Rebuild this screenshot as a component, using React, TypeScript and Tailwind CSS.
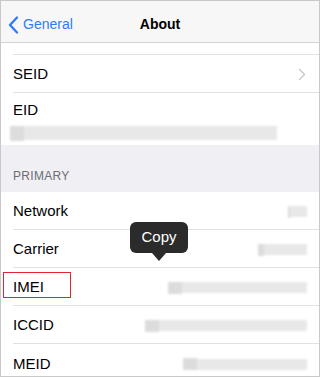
import React from "react";

type Row = {
  label: string;
  value?: number[]; // [width] of the blurred value
  chevron?: boolean;
  last?: boolean;
};

const Blur = ({ w, h = 12 }: { w: number; h?: number }) => (
  <div className="flex items-center blur-[1.2px]">
    <div className="bg-[#dcdcdc]" style={{ width: Math.min(14, w * 0.12), height: h }} />
    <div className="bg-[#e8e8e8]" style={{ width: w - Math.min(14, w * 0.12), height: h - 1 }} />
  </div>
);

const Chevron = () => (
  <svg width="8" height="13" viewBox="0 0 8 13" fill="none">
    <path d="M1.5 1.5 6.5 6.5 1.5 11.5" stroke="#c7c7cc" strokeWidth="1.4" strokeLinecap="round" strokeLinejoin="round" />
  </svg>
);

const ListRow = ({ label, value, chevron, last }: Row) => (
  <div className="ml-3 h-[38px] shrink-0">
    <div
      className={`flex h-full items-center justify-between pr-3 pt-[2px] ${
        last ? "" : "border-b border-[#e1e1e4]"
      }`}
    >
      <span className="text-[15px] text-black">{label}</span>
      {value && <Blur w={value[0]} />}
      {chevron && (
        <span className="pr-[1px]">
          <Chevron />
        </span>
      )}
    </div>
  </div>
);

export default function App() {
  return (
    <div
      className="relative flex h-[377px] w-[320px] flex-col overflow-hidden border border-[#c9c9c9] bg-[#efeff4]"
      style={{ fontFamily: '"Liberation Sans", Arial, sans-serif' }}
    >
      {/* nav bar */}
      <div className="grid h-[42px] shrink-0 grid-cols-[1fr_auto_1fr] items-center border-b border-[#d2d2d4] bg-[#f7f7f7] pt-[6px]">
        <div className="flex items-center gap-[4px] pl-[7px] text-[14px] text-[#2f7cf6]">
          <svg width="11" height="18" viewBox="0 0 11 18" fill="none">
            <path d="M9 1.5 2 9l7 7.5" stroke="#2f7cf6" strokeWidth="2.3" strokeLinecap="round" strokeLinejoin="round" />
          </svg>
          <span>General</span>
        </div>
        <div className="text-[14px] font-bold text-black">About</div>
        <div />
      </div>

      {/* first group */}
      <div className="shrink-0 bg-white">
        <div className="ml-3 h-[12px] border-b border-[#e1e1e4]" />
        <ListRow label="SEID" chevron />
        <div className="flex h-[52px] flex-col pl-3 pt-[6px]">
          <span className="text-[15px] text-black">EID</span>
          <div className="-ml-[3px] mt-[4px]">
            <Blur w={267} h={15} />
          </div>
        </div>
      </div>

      {/* section header */}
      <div className="flex h-[47px] shrink-0 items-end pb-[7px] pl-3 text-[12px] tracking-[0.3px] text-[#6d6d72]">
        PRIMARY
      </div>

      {/* second group */}
      <div className="flex-1 bg-white">
        <ListRow label="Network" value={[19]} />
        <ListRow label="Carrier" value={[49]} />
        <ListRow label="IMEI" value={[139]} />
        <ListRow label="ICCID" value={[162]} />
        <ListRow label="MEID" value={[124]} last />
      </div>

      {/* highlight box */}
      <div className="absolute left-[2px] top-[271px] h-[26px] w-[68px] border-[1.5px] border-[#e3262b]" />

      {/* copy tooltip */}
      <div className="absolute left-[129px] top-[221px] flex flex-col items-center">
        <div className="flex h-[31px] w-[58px] items-center justify-center rounded-[6px] bg-[#2b2b2b] text-[15px] text-white">
          Copy
        </div>
        <div className="h-0 w-0 border-x-[7px] border-t-[8px] border-x-transparent border-t-[#2b2b2b]" />
      </div>
    </div>
  );
}
